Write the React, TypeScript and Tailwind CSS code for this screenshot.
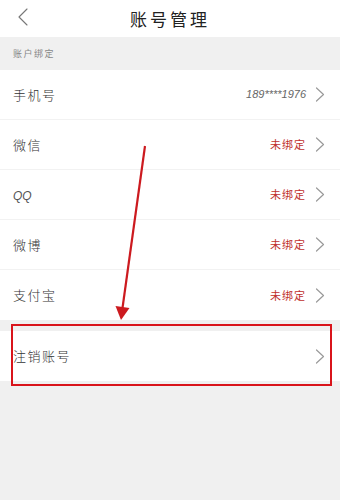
import React from "react";

const Chevron = () => (
  <svg width="10" height="15" viewBox="0 0 10 15" className="shrink-0">
    <path d="M1.5 1 L8.5 7.5 L1.5 14" fill="none" stroke="#9a9a9a" strokeWidth="1.2" strokeLinecap="round" strokeLinejoin="round" />
  </svg>
);

type RowProps = { label: React.ReactNode; value?: React.ReactNode; border?: boolean };

const Row = ({ label, value, border = true }: RowProps) => (
  <div className={`h-[50px] flex items-center justify-between pl-[13px] pr-[15px] bg-white ${border ? "border-b border-[#f2f2f2]" : ""}`}>
    <span className="text-[13px] tracking-[1.5px] font-light text-[#333]">{label}</span>
    <div className="flex items-center gap-[9px]">
      {value}
      <Chevron />
    </div>
  </div>
);

const Unbound = () => (
  <span className="text-[11px] tracking-[1px] text-[#c0302c]">未绑定</span>
);

export default function App() {
  return (
    <div
      className="relative w-[340px] h-[500px] bg-[#f0f0f0] overflow-hidden"
      style={{ fontFamily: '"Noto Sans CJK SC", "Noto Sans", sans-serif' }}
    >
      <div className="relative h-[37px] bg-white flex items-center justify-center">
        <svg width="12" height="18" viewBox="0 0 12 18" className="absolute left-[17px] top-[8px]">
          <path d="M10 1 L2 9 L10 17" fill="none" stroke="#777" strokeWidth="1.1" strokeLinecap="round" strokeLinejoin="round" />
        </svg>
        <span className="text-[17px] tracking-[3px] text-[#222]">账号管理</span>
      </div>
      <div className="h-[33px] flex items-center pl-[13px] text-[9px] tracking-[1.5px] text-[#888]">账户绑定</div>
      <div>
        <Row
          label="手机号"
          value={<span className="text-[11px] italic text-[#666]" style={{ fontFamily: '"Liberation Sans", sans-serif' }}>189****1976</span>}
        />
        <Row label="微信" value={<Unbound />} />
        <Row
          label={<span className="italic tracking-normal text-[12px] text-[#555]" style={{ fontFamily: '"Liberation Sans", sans-serif' }}>QQ</span>}
          value={<Unbound />}
        />
        <Row label="微博" value={<Unbound />} />
        <Row label="支付宝" value={<Unbound />} border={false} />
      </div>
      <div className="h-[11px]" />
      <Row label="注销账号" border={false} />

      <div className="absolute left-[11px] top-[324px] w-[321px] h-[62px] border-2 border-[#d9141b]" />
      <svg className="absolute left-0 top-0" width="340" height="500" viewBox="0 0 340 500">
        <line x1="145" y1="146" x2="122.5" y2="308" stroke="#cc1a1f" strokeWidth="2.2" />
        <polygon points="115.5,306 129.5,308 121,320" fill="#cc1a1f" />
      </svg>
    </div>
  );
}
